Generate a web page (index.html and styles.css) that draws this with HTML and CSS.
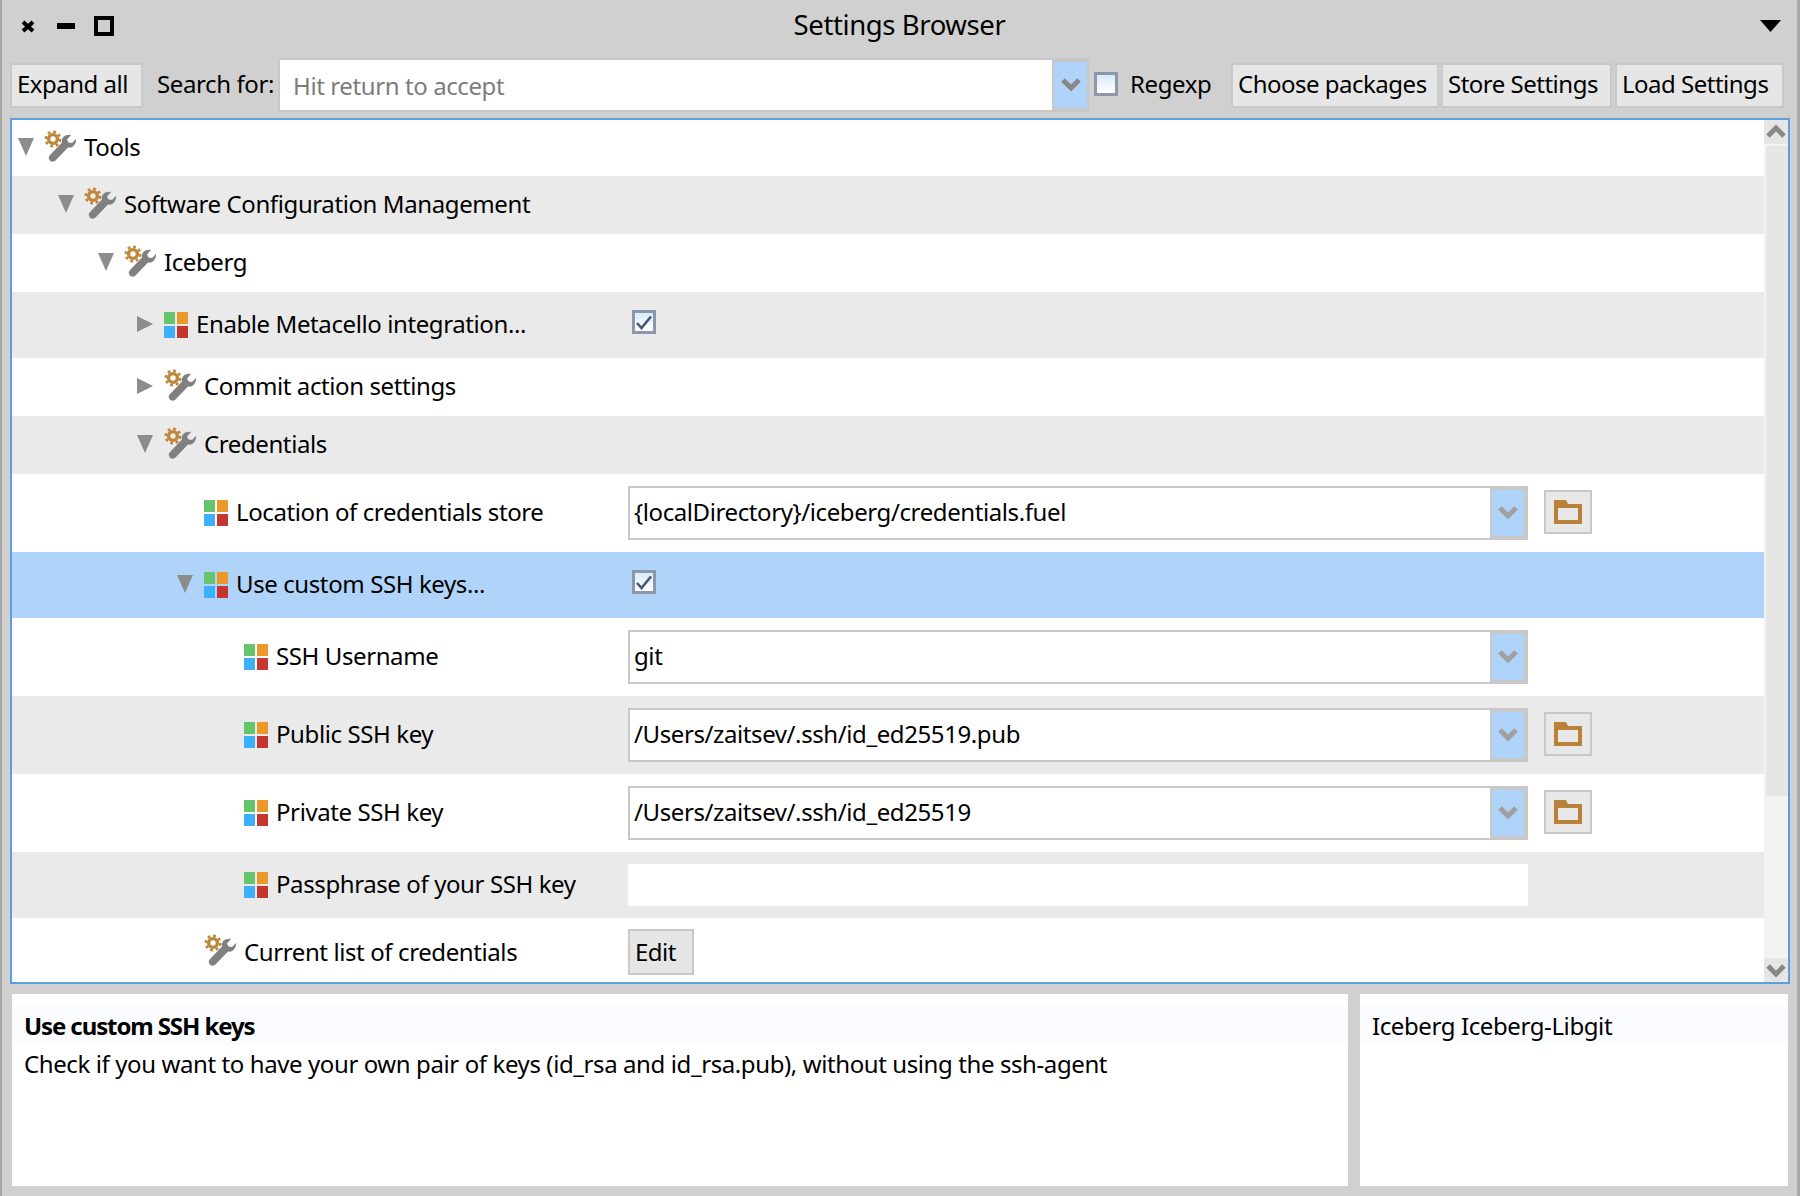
FILE: index.html
```html
<!DOCTYPE html>
<html lang="en">

<head>
    <meta charset="UTF-8">
    <meta name="viewport" content="width=device-width, initial-scale=1.0">
    <title>Settings Browser</title>

    <link rel="stylesheet" href="styles.css">

</head>


<body>

    <!-- shared icons -->
    <svg class="defs" width="0" height="0">
        <symbol id="tools" viewBox="0 0 32 32">
            <path fill="#808080" d="M27 5 L23 9.5 L24.5 12.5 L28 13 L32 9 C32.5 14 28.5 18.5 24 17.5 L12 30 C10 32.5 6.5 32 5.5 30 C4 27.5 5 26 6.5 24.5 L18 12.5 C17 8 21 4 27 5 Z" />
            <circle cx="9" cy="9" r="4.4" fill="none" stroke="#bd8639" stroke-width="3.4" />
            <circle cx="9" cy="9" r="7.2" fill="none" stroke="#bd8639" stroke-width="2.6" stroke-dasharray="2.8 2.85" />
        </symbol>
        <symbol id="pkg" viewBox="0 0 24 26">
            <rect x="0" y="0" width="11" height="12" fill="#66c46c" />
            <rect x="13" y="0" width="11" height="12" fill="#ec9828" />
            <rect x="0" y="14" width="11" height="12" fill="#3db0fc" />
            <rect x="13" y="14" width="11" height="12" fill="#c4362e" />
        </symbol>
        <symbol id="down" viewBox="0 0 16 18">
            <polygon points="0,0 16,0 8,18" fill="#8c8c8c" />
        </symbol>
        <symbol id="right" viewBox="0 0 16 16">
            <polygon points="0,0 16,8 0,16" fill="#8c8c8c" />
        </symbol>
        <symbol id="chev" viewBox="0 0 22 16">
            <polyline points="3,4 11,12 19,4" fill="none" stroke="currentColor" stroke-width="5" />
        </symbol>
        <symbol id="check" viewBox="0 0 18 18">
            <polyline points="2,10 6.5,15 16,3.5" fill="none" stroke="#4a5570" stroke-width="2.6" />
        </symbol>
        <symbol id="folder" viewBox="0 0 28 24">
            <path fill="#b98139" d="M0 0 H12 L14 4 H28 V24 H0 Z" />
            <rect x="4" y="8" width="20" height="12" fill="#e8e8e8" />
        </symbol>
    </svg>

    <div class="window">

        <div class="titlebar">
            <div class="win-btns">
                <svg class="btn-close" width="14" height="13" viewBox="0 0 14 13">
                    <path d="M2 2 L12 11 M12 2 L2 11" stroke="#000" stroke-width="4" />
                </svg>
                <span class="btn-min"></span>
                <span class="btn-max"></span>
            </div>
            <div class="title">Settings Browser</div>
            <div class="win-menu">
                <svg width="21" height="12" viewBox="0 0 21 12">
                    <polygon points="0,0 21,0 10.5,12" fill="#000" />
                </svg>
            </div>
        </div>

        <div class="toolbar">
            <button class="btn expand">Expand all</button>
            <span class="search-label">Search for:</span>
            <div class="search">
                <span class="search-text">Hit return to accept</span>
                <span class="drop"><svg width="22" height="16"><use href="#chev" /></svg></span>
            </div>
            <span class="check regexp-check"></span>
            <span class="regexp-label">Regexp</span>
            <button class="btn choose">Choose packages</button>
            <button class="btn store">Store Settings</button>
            <button class="btn load">Load Settings</button>
        </div>

        <div class="list">
            <div class="rows">

                <div class="row h56">
                    <div class="name lv0">
                        <svg class="tri"><use href="#down" /></svg>
                        <svg class="ico-tools"><use href="#tools" /></svg>
                        <span>Tools</span>
                    </div>
                </div>

                <div class="row h58 alt">
                    <div class="name lv1">
                        <svg class="tri"><use href="#down" /></svg>
                        <svg class="ico-tools"><use href="#tools" /></svg>
                        <span>Software Configuration Management</span>
                    </div>
                </div>

                <div class="row h58">
                    <div class="name lv2">
                        <svg class="tri"><use href="#down" /></svg>
                        <svg class="ico-tools"><use href="#tools" /></svg>
                        <span>Iceberg</span>
                    </div>
                </div>

                <div class="row h66 alt">
                    <div class="name lv3">
                        <svg class="tri"><use href="#right" /></svg>
                        <svg class="ico-pkg"><use href="#pkg" /></svg>
                        <span>Enable Metacello integration...</span>
                    </div>
                    <span class="check row-check"><svg width="18" height="18"><use href="#check" /></svg></span>
                </div>

                <div class="row h58">
                    <div class="name lv3">
                        <svg class="tri"><use href="#right" /></svg>
                        <svg class="ico-tools"><use href="#tools" /></svg>
                        <span>Commit action settings</span>
                    </div>
                </div>

                <div class="row h58 alt">
                    <div class="name lv3">
                        <svg class="tri"><use href="#down" /></svg>
                        <svg class="ico-tools"><use href="#tools" /></svg>
                        <span>Credentials</span>
                    </div>
                </div>

                <div class="row h78">
                    <div class="name lv4">
                        <span class="no-tri"></span>
                        <svg class="ico-pkg"><use href="#pkg" /></svg>
                        <span>Location of credentials store</span>
                    </div>
                    <div class="field">
                        <span class="field-text">{localDirectory}/iceberg/credentials.fuel</span>
                        <span class="drop"><svg width="22" height="16"><use href="#chev" /></svg></span>
                    </div>
                    <button class="folder-btn"><svg width="28" height="24"><use href="#folder" /></svg></button>
                </div>

                <div class="row h66 selected">
                    <div class="name lv4">
                        <svg class="tri"><use href="#down" /></svg>
                        <svg class="ico-pkg"><use href="#pkg" /></svg>
                        <span>Use custom SSH keys...</span>
                    </div>
                    <span class="check row-check"><svg width="18" height="18"><use href="#check" /></svg></span>
                </div>

                <div class="row h78">
                    <div class="name lv5">
                        <span class="no-tri"></span>
                        <svg class="ico-pkg"><use href="#pkg" /></svg>
                        <span>SSH Username</span>
                    </div>
                    <div class="field">
                        <span class="field-text">git</span>
                        <span class="drop"><svg width="22" height="16"><use href="#chev" /></svg></span>
                    </div>
                </div>

                <div class="row h78 alt">
                    <div class="name lv5">
                        <span class="no-tri"></span>
                        <svg class="ico-pkg"><use href="#pkg" /></svg>
                        <span>Public SSH key</span>
                    </div>
                    <div class="field">
                        <span class="field-text">/Users/zaitsev/.ssh/id_ed25519.pub</span>
                        <span class="drop"><svg width="22" height="16"><use href="#chev" /></svg></span>
                    </div>
                    <button class="folder-btn"><svg width="28" height="24"><use href="#folder" /></svg></button>
                </div>

                <div class="row h78">
                    <div class="name lv5">
                        <span class="no-tri"></span>
                        <svg class="ico-pkg"><use href="#pkg" /></svg>
                        <span>Private SSH key</span>
                    </div>
                    <div class="field">
                        <span class="field-text">/Users/zaitsev/.ssh/id_ed25519</span>
                        <span class="drop"><svg width="22" height="16"><use href="#chev" /></svg></span>
                    </div>
                    <button class="folder-btn"><svg width="28" height="24"><use href="#folder" /></svg></button>
                </div>

                <div class="row h66 alt">
                    <div class="name lv5">
                        <span class="no-tri"></span>
                        <svg class="ico-pkg"><use href="#pkg" /></svg>
                        <span>Passphrase of your SSH key</span>
                    </div>
                    <div class="pass-field"></div>
                </div>

                <div class="row h64 last">
                    <div class="name lv4">
                        <span class="no-tri"></span>
                        <svg class="ico-tools"><use href="#tools" /></svg>
                        <span>Current list of credentials</span>
                    </div>
                    <button class="btn edit">Edit</button>
                </div>

            </div>

            <div class="scrollbar">
                <div class="scroll-btn"><svg class="flip" width="22" height="16"><use href="#chev" /></svg></div>
                <div class="scroll-thumb"></div>
                <div class="scroll-rest"></div>
                <div class="scroll-btn"><svg width="22" height="16"><use href="#chev" /></svg></div>
            </div>
        </div>

        <div class="panels">
            <div class="panel panel-desc">
                <div class="panel-line"><b>Use custom SSH keys</b></div>
                <div class="panel-text">Check if you want to have your own pair of keys (id_rsa and id_rsa.pub), without using the ssh-agent</div>
            </div>
            <div class="panel panel-pkg">
                <div class="panel-line">Iceberg Iceberg-Libgit</div>
            </div>
        </div>

    </div>

</body>

</html>
```

FILE: styles.css
```css
* {
    box-sizing: border-box;
}

body {
    margin: 0;
    font-family: "Noto Sans", sans-serif;
    font-size: 24px;
    letter-spacing: -0.4px;
    color: #000;
    background: #d0d0d0;
}

.defs {
    position: absolute;
}

.window {
    width: 1800px;
    height: 1196px;
    overflow: hidden;
    background: #d0d0d0;
    border-left: 2px solid #a8a8a8;
    border-right: 3px solid #a8a8a8;
}

/* title bar */
.titlebar {
    height: 58px;
    display: grid;
    grid-template-columns: 1fr auto 1fr;
    align-items: center;
    padding-bottom: 6px;
}

.win-btns {
    display: flex;
    align-items: center;
    padding-left: 19px;
}

.btn-min {
    width: 18px;
    height: 6px;
    margin-left: 22px;
    background: #000;
}

.btn-max {
    width: 20px;
    height: 20px;
    margin-left: 19px;
    border: 4px solid #000;
}

.title {
    text-align: center;
    font-size: 27.5px;
    line-height: 34px;
    padding-bottom: 3px;
}

.win-menu {
    display: flex;
    justify-content: flex-end;
    padding-right: 16px;
}

/* toolbar */
.toolbar {
    height: 54px;
    display: flex;
    align-items: center;
    padding-left: 8px;
}

.btn {
    height: 45px;
    padding: 0 0 3px 5px;
    border: 2px solid #c8c8c8;
    background: #e6e6e6;
    font: inherit;
    letter-spacing: -0.5px;
    color: #000;
    text-align: left;
    white-space: nowrap;
}

.expand {
    width: 133px;
}

.search-label {
    margin-left: 14px;
    margin-top: -3px;
    width: 121px;
    white-space: nowrap;
}

.search {
    width: 811px;
    height: 54px;
    display: flex;
    border: 2px solid #c8c8c8;
    background: #c8c8c8;
}

.search-text {
    flex: 1;
    padding: 9px 0 0 13px;
    background: #fff;
    color: #7c7c7c;
}

.drop {
    margin: 2px 2px 2px 2px;
    display: flex;
    align-items: center;
    justify-content: center;
    background: #b0d4f9;
    color: #a0a0a0;
}

.drop svg {
    margin-top: -2px;
}

.search .drop {
    width: 33px;
    margin-right: 0;
    color: #888;
}

.check {
    display: flex;
    align-items: center;
    justify-content: center;
    width: 24px;
    height: 24px;
    border: 3px solid #8c96ad;
    background: linear-gradient(#d8ecfb, #fff);
}

.regexp-check {
    margin-left: 5px;
    margin-top: -3px;
}

.regexp-label {
    margin-left: 12px;
    margin-top: -3px;
    width: 101px;
}

.choose {
    width: 208px;
}

.store {
    width: 171px;
    margin-left: 2px;
}

.load {
    width: 169px;
    margin-left: 3px;
}

/* settings tree */
.list {
    height: 866px;
    width: 1780px;
    margin: 6px 0 0 8px;
    display: flex;
    border: 2px solid #5b9fe0;
    background: #fff;
}

.rows {
    flex: 1;
}

.row {
    display: flex;
    align-items: center;
    background: #fff;
}

.h56 { height: 56px; }
.h58 { height: 58px; }
.h64 { height: 64px; }
.h66 { height: 66px; }
.h78 { height: 78px; }

.alt {
    background: #eaeaea;
}

.selected {
    background: #b0d4f9;
}

.last {
    padding-top: 4px;
}

.name {
    width: 616px;
    height: 100%;
    flex: none;
    display: flex;
    align-items: center;
    white-space: nowrap;
}

.name span:last-child {
    margin-top: -4px;
}

.last .name span:last-child {
    margin-top: -2px;
}

.lv0 { padding-left: 6px; }
.lv1 { padding-left: 46px; }
.lv2 { padding-left: 86px; }
.lv3 { padding-left: 125px; }
.lv4 { padding-left: 165px; }
.lv5 { padding-left: 205px; }

.tri,
.no-tri {
    width: 16px;
    height: 18px;
    flex: none;
    margin: -3px 10px 0 0;
}

.lv3 .tri,
.lv4 .tri,
.lv4 .no-tri,
.lv5 .no-tri {
    margin-right: 11px;
}

.ico-tools {
    width: 32px;
    height: 32px;
    flex: none;
    margin: -4px 8px 0 0;
}

.ico-pkg {
    width: 24px;
    height: 26px;
    flex: none;
    margin: -1px 8px 0 0;
}

.row-check {
    margin: -6px 0 0 4px;
}

.field {
    width: 900px;
    height: 54px;
    flex: none;
    display: flex;
    border: 2px solid #c8c8c8;
    background: #c8c8c8;
}

.field-text {
    flex: 1;
    padding: 7px 0 0 4px;
    background: #fff;
}

.field .drop {
    width: 32px;
}

.folder-btn {
    width: 48px;
    height: 44px;
    margin: -2px 0 0 16px;
    padding: 0;
    display: flex;
    align-items: center;
    justify-content: center;
    border: 2px solid #c8c8c8;
    background: #e8e8e8;
}

.pass-field {
    width: 900px;
    height: 42px;
    background: #fff;
}

.edit {
    width: 66px;
    height: 46px;
    padding-bottom: 1px;
}

/* scrollbar */
.scrollbar {
    width: 24px;
    display: flex;
    flex-direction: column;
    background: #f3f3f3;
}

.scroll-btn {
    height: 24px;
    display: flex;
    align-items: center;
    justify-content: center;
    background: #e6e6e6;
    color: #888;
}

.flip {
    transform: rotate(180deg);
}

.scroll-thumb {
    height: 650px;
    margin: 2px 0 0 2px;
    background: #e6e6e6;
}

.scroll-rest {
    flex: 1;
}

/* bottom panels */
.panels {
    display: flex;
    gap: 12px;
    width: 1776px;
    height: 192px;
    margin: 10px 0 0 10px;
}

.panel {
    background: #fff;
    padding-top: 12px;
}

.panel-desc {
    width: 1336px;
}

.panel-pkg {
    flex: 1;
}

.panel-line {
    height: 38px;
    padding-left: 12px;
    background: #fbfcff;
    line-height: 40px;
}

.panel-line b {
    letter-spacing: -1.1px;
}

.panel-text {
    height: 38px;
    padding-left: 12px;
    line-height: 40px;
}
```
